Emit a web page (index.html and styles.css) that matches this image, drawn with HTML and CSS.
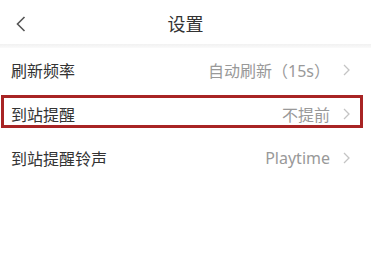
FILE: index.html
```html
<!DOCTYPE html>
<html lang="zh">
<head>
    <meta charset="UTF-8">
    <title>设置</title>
    <link rel="stylesheet" href="styles.css">
</head>
<body>
    <div class="header">
        <svg class="back" width="10" height="16" viewBox="0 0 10 16">
            <path d="M8.5 1 L1.5 8 L8.5 15" fill="none" stroke="#555" stroke-width="1.6"/>
        </svg>
        <h2 class="title">设置</h2>
    </div>
    <div class="divider"></div>

    <div class="list">
        <div class="row">
            <span class="label">刷新频率</span>
            <span class="value">自动刷新（15s）</span>
            <svg class="arrow" width="7" height="12" viewBox="0 0 7 12"><path d="M1 1 L6 6 L1 11" fill="none" stroke="#c4c4c4" stroke-width="1.3"/></svg>
        </div>
        <div class="row">
            <span class="label">到站提醒</span>
            <span class="value">不提前</span>
            <svg class="arrow" width="7" height="12" viewBox="0 0 7 12"><path d="M1 1 L6 6 L1 11" fill="none" stroke="#c4c4c4" stroke-width="1.3"/></svg>
            <div class="mark"></div>
        </div>
        <div class="row">
            <span class="label">到站提醒铃声</span>
            <span class="value">Playtime</span>
            <svg class="arrow" width="7" height="12" viewBox="0 0 7 12"><path d="M1 1 L6 6 L1 11" fill="none" stroke="#c4c4c4" stroke-width="1.3"/></svg>
        </div>
    </div>
</body>
</html>
```

FILE: styles.css
```css
body { margin: 0; background: #fff; font-family: "Noto Sans", "Noto Sans CJK SC", sans-serif; color: #333; }
.header { position: relative; height: 44px; display: flex; align-items: center; justify-content: center; padding-top: 2px; box-sizing: border-box; }
.back { position: absolute; left: 16px; top: 16px; }
.title { margin: 0; font-size: 18px; font-weight: normal; color: #333; }
.divider { height: 4px; background: linear-gradient(#f1f1f1, #fafafa); }
.row { position: relative; height: 44px; display: flex; align-items: center; padding: 0 21px 0 11px; font-size: 16px; }
.label { flex: 1; color: #333; }
.value { color: #999; margin-right: 13px; }
.mark { position: absolute; left: 1px; right: 8px; top: 3px; height: 27px; border: 3px solid #a82424; }
```
